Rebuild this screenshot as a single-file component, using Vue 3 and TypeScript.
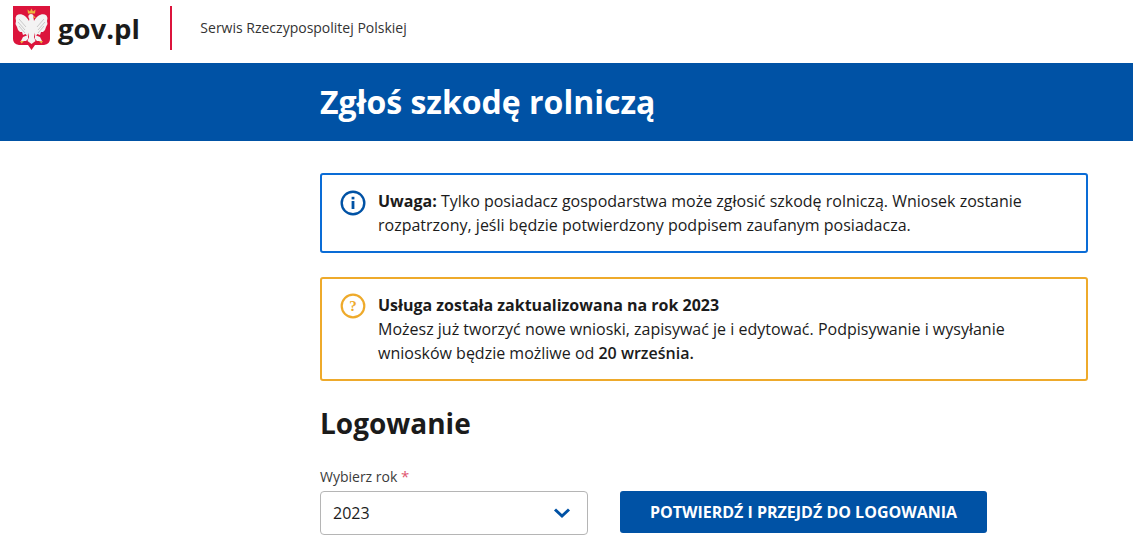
<script setup lang="ts">
const wingLines: string[] = [
  'M6 13 L13 21',
  'M5 16 L12 24',
  'M6 20 L12 27',
  'M31 13 L24 21',
  'M32 16 L25 24',
  'M31 20 L25 27',
]
</script>

<template>
  <div class="page">
    <header class="top">
      <div class="brand">
        <svg class="emblem" width="37" height="45" viewBox="0 0 37 45" aria-hidden="true">
          <path d="M0 0 H37 V33 Q37 38 31 39 H22 L18.500 44 L15 39 H6 Q0 38 0 33 Z" fill="#dc143c" />
          <g fill="#f3f3f3">
            <path d="M16.500 12 L14.500 24 L16 31 L14.500 35 L18.500 38 L22.500 35 L21 31 L22.500 24 L20.500 12 Z" />
            <path d="M16 15 C13 9 7 6.500 3.500 9.500 L2.500 12 L3 15 L2.500 18 L4 21 L5 24 L7 26 L9 26 L10 29 L12.500 28 L14.500 30 L16 24 Z" />
            <path d="M21 15 C24 9 30 6.500 33.500 9.500 L34.500 12 L34 15 L34.500 18 L33 21 L32 24 L30 26 L28 26 L27 29 L24.500 28 L22.500 30 L21 24 Z" />
            <path d="M15 29 L10 31 L8 35 L13 35 L15 33 Z M22 29 L27 31 L29 35 L24 35 L22 33 Z" />
            <circle cx="18" cy="10.500" r="2.600" />
          </g>
          <path v-for="d in wingLines" :key="d" :d="d" fill="none" stroke="#c9c9c9" stroke-width="1" />
          <path d="M15 7.500 L14.500 3.500 L17 5.500 L18.500 2.500 L20 5.500 L22.500 3.500 L22 7.500 Z" fill="#edb33f" />
          <path d="M7 35 l1.500 2.500 l2.500 -2.500 Z M30 35 l-1.500 2.500 l-2.500 -2.500 Z M20.500 10 l2.500 1.200 l-2.500 1 Z" fill="#edb33f" />
        </svg>
        <span class="logo-text">gov.pl</span>
      </div>
      <div class="divider"></div>
      <span class="service">Serwis Rzeczypospolitej Polskiej</span>
    </header>

    <section class="hero">
      <h1 class="hero-title">Zgłoś szkodę rolniczą</h1>
    </section>

    <main class="content">
      <div class="alert alert-info">
        <svg class="alert-icon" width="26" height="26" viewBox="0 0 26 26" aria-hidden="true">
          <circle cx="13" cy="13" r="11.300" fill="none" stroke="#0052a5" stroke-width="2.400" />
          <rect x="11.600" y="11" width="2.800" height="8" fill="#0052a5" />
          <rect x="11.600" y="6.800" width="2.800" height="2.600" fill="#0052a5" />
        </svg>
        <p class="alert-text"><strong>Uwaga:</strong> Tylko posiadacz gospodarstwa może zgłosić szkodę rolniczą. Wniosek zostanie rozpatrzony, jeśli będzie potwierdzony podpisem zaufanym posiadacza.</p>
      </div>

      <div class="alert alert-warn">
        <svg class="alert-icon" width="26" height="26" viewBox="0 0 26 26" aria-hidden="true">
          <circle cx="13" cy="13" r="11.300" fill="none" stroke="#eeaa2b" stroke-width="2.200" />
          <text x="13" y="18" text-anchor="middle" class="q">?</text>
        </svg>
        <p class="alert-text"><strong>Usługa została zaktualizowana na rok 2023</strong><br />Możesz już tworzyć nowe wnioski, zapisywać je i edytować. Podpisywanie i wysyłanie wniosków będzie możliwe od <strong class="semi">20 września.</strong></p>
      </div>

      <h2 class="login-title">Logowanie</h2>

      <div class="form-row">
        <div class="field">
          <label class="field-label">Wybierz rok <span class="req">*</span></label>
          <div class="select">
            <span>2023</span>
            <svg width="18" height="12" viewBox="0 0 18 12" aria-hidden="true">
              <path d="M2 2.500 L9 9 L16 2.500" fill="none" stroke="#0052a5" stroke-width="3" />
            </svg>
          </div>
        </div>
        <button class="cta" type="button">POTWIERDŹ I PRZEJDŹ DO LOGOWANIA</button>
      </div>
    </main>
  </div>
</template>

<style>
html, body { margin: 0; padding: 0; background: #fff; overflow: hidden; }
</style>

<style scoped>
.page {
  width: 1133px;
  height: 549px;
  overflow: hidden;
  font-family: "Open Sans", "Noto Sans", sans-serif;
  color: #1b1b1b;
  background: #fff;
}
.top {
  height: 63px;
  display: flex;
  align-items: flex-start;
  box-sizing: border-box;
  padding: 6px 0 0 13px;
}
.brand { display: flex; align-items: center; height: 45px; }
.emblem { display: block; }
.logo-text {
  margin-left: 8px;
  font-size: 27.5px;
  font-weight: 700;
  line-height: 45px;
}
.divider { width: 2px; height: 44px; background: #dc143c; margin-left: 30.5px; }
.service { margin-left: 28px; font-size: 14px; line-height: 44px; color: #333; }
.hero { height: 78px; background: #0052a5; padding-left: 320px; display: flex; align-items: center; }
.hero-title { margin: 0; color: #fff; font-size: 32px; font-weight: 700; line-height: 44px; }
.content { width: 768px; margin-left: 320px; padding-top: 32px; }
.alert {
  box-sizing: border-box;
  display: flex;
  border-width: 2px;
  border-style: solid;
  border-radius: 3px;
  padding: 14px 18px 14px 18px;
}
.alert-info { border-color: #0a6cd6; height: 80px; }
.alert-warn { border-color: #eeaa2b; height: 104px; margin-top: 24px; }
.alert-icon { flex: none; margin-right: 12px; margin-top: 1px; }
.alert-warn .alert-icon { margin-top: 0; }
.alert-text { margin: 0; font-size: 16px; line-height: 24px; }
.alert-text strong { font-weight: 700; }
.alert-text .semi { font-weight: 600; }
.q { font-family: "Liberation Serif", serif; font-size: 15px; font-weight: 700; fill: #eeaa2b; }
.login-title { margin: 22px 0 0; font-size: 28px; font-weight: 700; line-height: 40px; }
.form-row { display: flex; align-items: flex-end; margin-top: 24px; }
.field { width: 268px; }
.field-label { display: block; font-size: 14px; line-height: 20px; color: #3b3b3b; margin-bottom: 4px; }
.req { color: #e0566f; font-size: 15px; line-height: 1; }
.select {
  box-sizing: border-box;
  height: 44px;
  border: 1px solid #b5b5b5;
  border-radius: 4px;
  display: flex;
  align-items: center;
  justify-content: space-between;
  padding: 0 16px 0 12px;
  font-size: 16px;
}
.cta {
  margin-left: 32px;
  margin-bottom: 2px;
  width: 367px;
  height: 42px;
  border: 0;
  border-radius: 3px;
  background: #0052a5;
  color: #fff;
  font-family: inherit;
  font-size: 16px;
  font-weight: 700;
}
</style>
